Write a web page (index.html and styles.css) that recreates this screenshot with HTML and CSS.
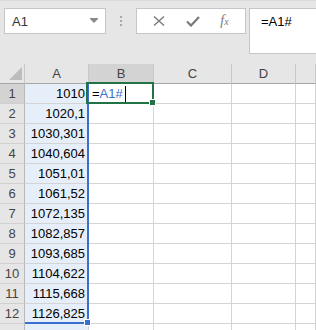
FILE: index.html
```html
<!DOCTYPE html>
<html>

<head>
  <title>Spill range</title>
  <link rel="stylesheet" href="styles.css">
</head>

<body>
  <div class="toolbar">
    <div class="namebox">
      <span class="namebox-text">A1</span>
      <svg class="namebox-arrow" width="8" height="5" viewBox="0 0 8 5">
        <rect x="0" y="0" width="8" height="1" fill="#8a8a8a"/>
        <polygon points="0,1 8,1 4,5" fill="#8a8a8a"/>
      </svg>
    </div>
    <div class="dots"><i></i><i></i><i></i></div>
    <div class="fxbox">
      <svg width="12" height="10" viewBox="0 0 12 10">
        <path d="M1 0.5 L11 9.5 M11 0.5 L1 9.5" stroke="#7a7a7a" stroke-width="1.4" fill="none"/>
      </svg>
      <svg width="14" height="11" viewBox="0 0 14 11">
        <path d="M1 5.5 L5 9.5 L13 1" stroke="#7a7a7a" stroke-width="2.2" fill="none"/>
      </svg>
      <span class="fx">f<small>x</small></span>
    </div>
    <div class="formula">=A1#</div>
  </div>

  <div class="sheet">
    <div class="grid" id="grid"></div>
    <div class="spill"><i class="spill-handle"></i></div>
    <div class="active"><i class="active-handle"></i></div>
  </div>

  <script>
    // values spilled from A1: 1010 * 1.01^n
    const values = ['1010', '1020,1', '1030,301', '1040,604', '1051,01', '1061,52',
      '1072,135', '1082,857', '1093,685', '1104,622', '1115,668', '1126,825'];
    const letters = ['A', 'B', 'C', 'D', ''];
    const grid = document.getElementById('grid');

    function cell(cls, html) {
      const div = document.createElement('div');
      div.className = cls;
      div.innerHTML = html || '';
      grid.appendChild(div);
    }

    cell('corner', '<i class="corner-tri"></i>');
    letters.forEach((l) => cell(l === 'B' ? 'colhead on' : 'colhead', l));

    // row 13 is only a sliver at the bottom edge, so no label
    for (let r = 1; r <= 13; r++) {
      cell(r === 1 ? 'rowhead on' : 'rowhead', r < 13 ? r : '');
      cell('c spilled', values[r - 1] || '');
      cell('c', r === 1 ? '<span class="eq">=</span><span class="ref">A1#</span><i class="caret"></i>' : '');
      cell('c');
      cell('c');
      cell('c');
    }
  </script>
</body>

</html>
```

FILE: styles.css
```css
body {
  margin: 0;
  width: 316px;
  height: 330px;
  overflow: hidden;
  background: #ffffff;
  font-family: "Liberation Sans", Arial, sans-serif;
  font-size: 13px;
  color: #000;
}

.toolbar {
  height: 64px;
  box-sizing: border-box;
  background: #e6e6e6;
  border-top: 1px solid #dadada;
  display: flex;
  align-items: flex-start;
  padding: 7px 0 0 4px;
}

.namebox {
  width: 102px;
  height: 26px;
  box-sizing: border-box;
  background: #fff;
  border: 1px solid #c6c6c6;
  display: flex;
  align-items: center;
  justify-content: space-between;
  padding: 0 7px 0 7px;
  color: #333;
}

.namebox-arrow {
  margin-top: -1px;
}

.dots {
  width: 30px;
  height: 26px;
  display: flex;
  flex-direction: column;
  align-items: center;
  justify-content: center;
  gap: 2px;
}

.dots i {
  width: 2px;
  height: 2px;
  background: #a8a8a8;
}

.fxbox {
  width: 110px;
  height: 26px;
  box-sizing: border-box;
  background: #fff;
  border: 1px solid #c6c6c6;
  display: flex;
  align-items: center;
  justify-content: space-around;
  padding: 0 6px;
}

.fx {
  font-family: "Liberation Serif", serif;
  font-style: italic;
  font-size: 14px;
  color: #7a7a7a;
}

.fx small {
  font-size: 10px;
}

.formula {
  flex: 1;
  height: 46px;
  box-sizing: border-box;
  margin-left: 3px;
  margin-right: -1px;
  background: #fff;
  border: 1px solid #c6c6c6;
  padding: 5px 0 0 11px;
}

.sheet {
  position: relative;
}

.grid {
  display: grid;
  grid-template-columns: 25px 64px 65px 78px 64px 1fr;
  grid-auto-rows: 20px;
}

.grid > div {
  box-sizing: border-box;
  border-right: 1px solid #d4d4d4;
  border-bottom: 1px solid #d4d4d4;
}

.corner,
.colhead,
.rowhead {
  background: #e6e6e6;
  color: #444;
}

.grid > .corner,
.grid > .colhead {
  border-bottom: 1px solid #a6a6a6;
  border-right: 1px solid #c8c8c8;
  text-align: center;
  line-height: 19px;
}

.grid > .rowhead {
  border-right: 1px solid #b8b8b8;
  border-bottom: 1px solid #d0d0d0;
  text-align: center;
  line-height: 19px;
}

.colhead.on,
.rowhead.on {
  background: #d3d3d3;
}

.corner {
  position: relative;
}

.corner-tri {
  position: absolute;
  right: 2px;
  bottom: 3px;
  width: 0;
  height: 0;
  border-left: 13px solid transparent;
  border-bottom: 13px solid #bcbcbc;
}

.c {
  line-height: 19px;
  padding: 0 3px;
  white-space: nowrap;
}

.spilled {
  background: #e6eefa;
  text-align: right;
}

.eq {
  color: #000;
}

.ref {
  color: #3a6fd0;
}

.caret {
  display: inline-block;
  width: 1px;
  height: 16px;
  background: #000;
  vertical-align: -4px;
  margin-left: 2px;
}

.spill {
  position: absolute;
  left: 25px;
  top: 20px;
  width: 64px;
  height: 240px;
  box-sizing: border-box;
  border-right: 2px solid #3a6fd0;
  border-bottom: 2px solid #3a6fd0;
}

.spill-handle {
  position: absolute;
  right: -4px;
  bottom: -4px;
  width: 5px;
  height: 5px;
  background: #3a6fd0;
  border: 1px solid #fff;
}

.active {
  position: absolute;
  left: 86px;
  top: 18px;
  width: 68px;
  height: 22px;
  box-sizing: border-box;
  border: 2px solid #217346;
}

.active-handle {
  position: absolute;
  right: -4px;
  bottom: -4px;
  width: 5px;
  height: 5px;
  background: #217346;
  border: 1px solid #fff;
}
```
